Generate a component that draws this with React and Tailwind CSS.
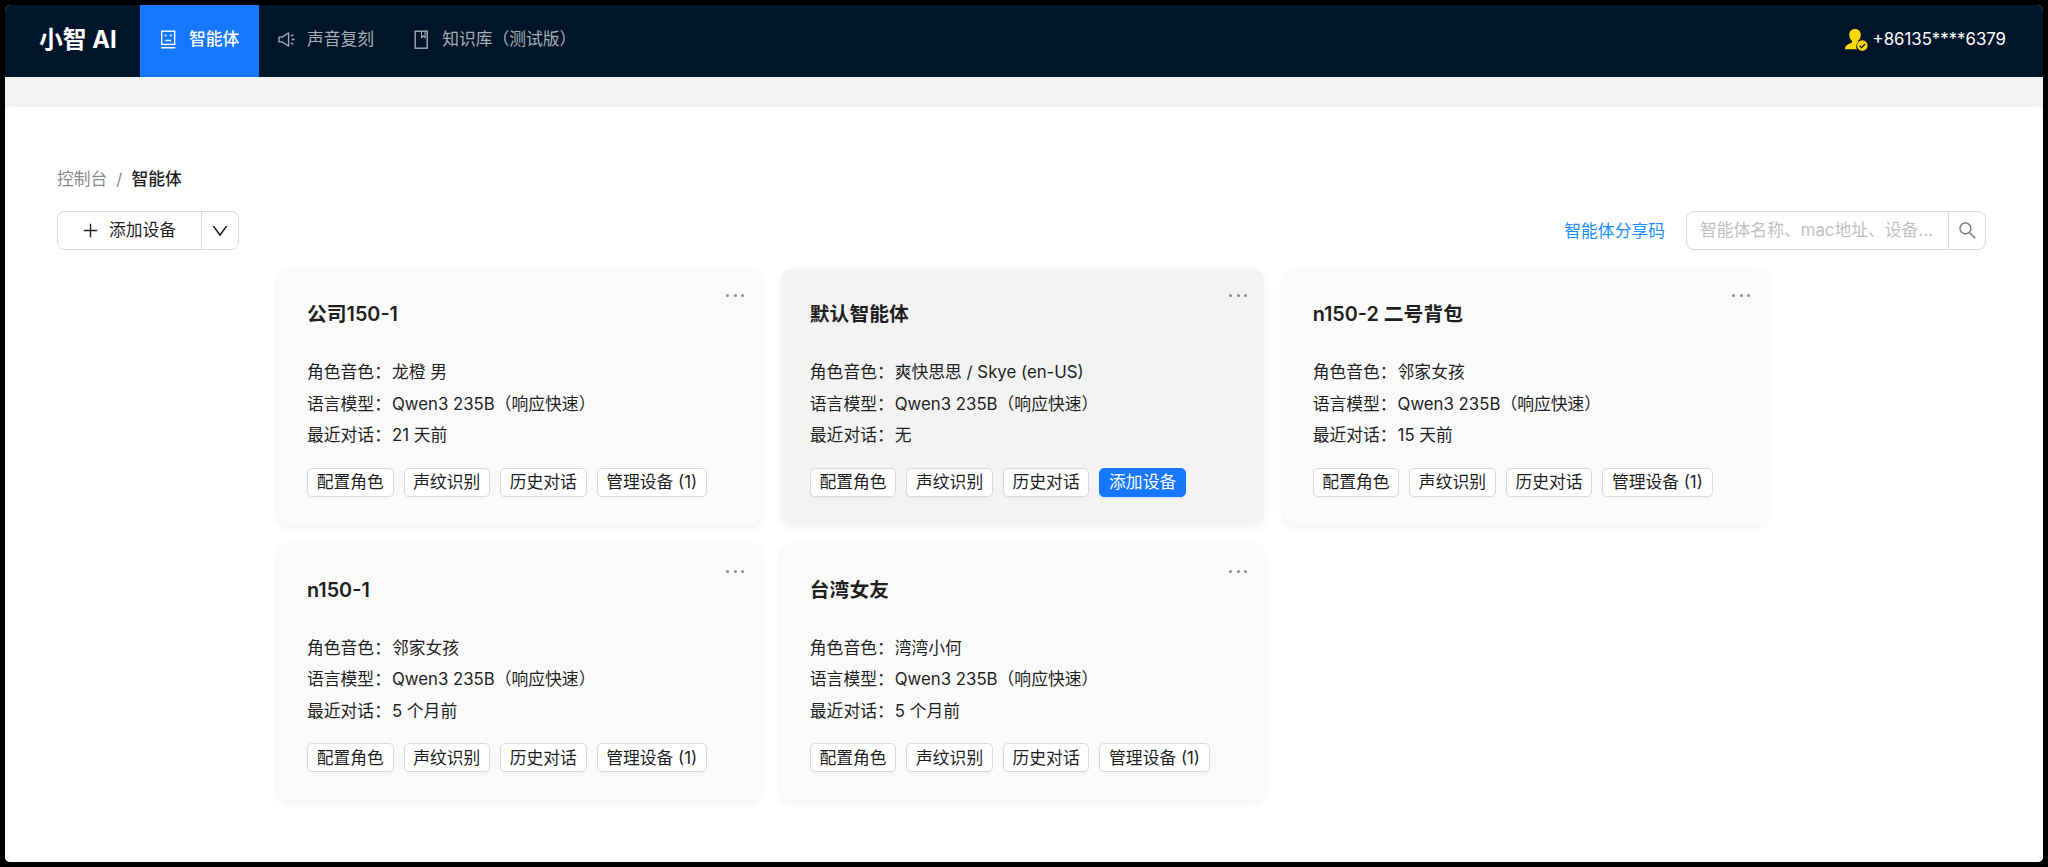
import React from 'react';
import { AiOutlineSound, AiOutlinePlus, AiOutlineDown, AiOutlineSearch } from 'react-icons/ai';

const agents = [
  { name: '公司150-1', voice: '龙橙 男', last: '21 天前', devices: 1 },
  { name: '默认智能体', voice: '爽快思思 / Skye (en-US)', last: '无', devices: 0 },
  { name: 'n150-2 二号背包', voice: '邻家女孩', last: '15 天前', devices: 1 },
  { name: 'n150-1', voice: '邻家女孩', last: '5 个月前', devices: 1 },
  { name: '台湾女友', voice: '湾湾小何', last: '5 个月前', devices: 1 },
];

const AgentIcon = () => (
  <svg width="17" height="20" viewBox="0 0 17 20" fill="none" stroke="currentColor" strokeWidth="1.4">
    <rect x="1.7" y="1.2" width="13" height="13.2" />
    <path d="M4.600 5.500h2M9.800 5.500h2M5.400 10.500h5.600M1.100 17.800h14.200" />
  </svg>
);

const BookIcon = () => (
  <svg width="15" height="20" viewBox="0 0 15 20" fill="none" stroke="currentColor" strokeWidth="1.4">
    <rect x="1.2" y="1.2" width="12" height="17" />
    <path d="M7.500 1.500v6l1.800-1.500 1.800 1.500v-6" strokeWidth="1.1" />
  </svg>
);

const UserIcon = () => (
  <svg width="23" height="22" viewBox="0 0 23 22" fill="#ffd60a">
    <path d="M10 0c3.400 0 5.800 2.300 5.800 5.800 0 2.900-1.200 4.800-2.700 6v1.100a6 6 0 0 0-1.900 4.300c0 1.200.3 2.200.9 3.100H0c0-3.700 2.500-4.800 7-6.700v-1.800c-1.600-1.200-2.700-3.100-2.700-6C4.300 2.300 6.600 0 10 0z" />
    <circle cx="17.300" cy="16.500" r="5.300" />
    <path d="M14.600 16.600l2 2 3.500-3.600" fill="none" stroke="#001529" strokeWidth="1.200" />
  </svg>
);

const Header = () => (
  <header className="h-18 bg-[#001529] flex items-center text-white shrink-0">
    <h1 className="w-[135px] pl-[34px] pb-[3px] text-[23.8px] font-bold whitespace-nowrap leading-none">小智 AI</h1>
    <nav className="flex h-full text-[#a6adb4]">
      <a className="w-[119px] pl-5 pb-[3px] flex items-center bg-[#1677ff] text-white font-medium">
        <AgentIcon />
        <span className="ml-3">智能体</span>
      </a>
      <a className="pl-[18px] pb-[3px] flex items-center">
        <AiOutlineSound size={19} />
        <span className="ml-[11px]">声音复刻</span>
      </a>
      <a className="pl-[40px] pb-[3px] flex items-center">
        <BookIcon />
        <span className="ml-[13px]">知识库（测试版）</span>
      </a>
    </nav>
    <div className="ml-auto mr-[37px] pb-[3px] flex items-center gap-[5px]">
      <UserIcon />
      <span className="text-[16.8px]">+86135****6379</span>
    </div>
  </header>
);

const Toolbar = () => (
  <div className="flex items-center justify-between h-[39px]">
    <div className="flex h-full w-[182px] border border-[#d9d9d9] rounded-lg bg-white">
      <button className="flex-1 flex items-center justify-center gap-[9px] pr-0.5">
        <AiOutlinePlus size={19} />
        <span className="pt-px">添加设备</span>
      </button>
      <button className="w-[37px] border-l border-[#d9d9d9] flex items-center justify-center">
        <AiOutlineDown size={20} />
      </button>
    </div>
    <div className="flex items-center h-full">
      <a className="text-[#1890ff] mr-[21px] pt-0.5">智能体分享码</a>
      <div className="flex h-full w-[300px] border border-[#d9d9d9] rounded-lg bg-white">
        <div className="flex-1 flex items-center pl-[13px] pt-px text-[#bfbfbf] whitespace-nowrap">
          智能体名称、mac地址、设备...
        </div>
        <button className="w-[37px] border-l border-[#d9d9d9] flex items-center justify-center text-[#808080]">
          <AiOutlineSearch size={21} />
        </button>
      </div>
    </div>
  </div>
);

const CardButton = ({ children, primary }) => (
  <button
    className={
      primary
        ? 'h-[29px] px-[8.7px] border border-[#1677ff] rounded-[5px] bg-[#1677ff] text-white shadow-[0_2px_0_rgba(5,145,255,0.1)]'
        : 'h-[29px] px-[8.7px] border border-[#d9d9d9] rounded-[5px] bg-white shadow-[0_2px_0_rgba(0,0,0,0.02)]'
    }
  >
    <span className="flex items-center pt-px whitespace-nowrap leading-none">{children}</span>
  </button>
);

const AgentCard = ({ agent }) => (
  <div
    className={`relative h-[256px] rounded-[10px] px-[29px] shadow-[0_2px_10px_rgba(0,0,0,0.07)] ${
      agent.devices ? 'bg-[#fafafa]' : 'bg-[#f3f3f3]'
    }`}
  >
    <div className="absolute top-[25px] right-[17px] flex gap-[4.5px]">
      <i className="size-[3px] rounded-full bg-[#8c8c8c]" />
      <i className="size-[3px] rounded-full bg-[#8c8c8c]" />
      <i className="size-[3px] rounded-full bg-[#8c8c8c]" />
    </div>
    <h3 className="pt-[30px] text-[19.8px] leading-[31px] font-semibold">{agent.name}</h3>
    <div className="mt-[27px] leading-[31.5px]">
      <p><span className="mr-px">角色音色：</span>{agent.voice}</p>
      <p><span className="mr-px">语言模型：</span>Qwen3 235B（响应快速）</p>
      <p><span className="mr-px">最近对话：</span>{agent.last}</p>
    </div>
    <div className="mt-[16px] flex gap-2.5">
      <CardButton>配置角色</CardButton>
      <CardButton>声纹识别</CardButton>
      <CardButton>历史对话</CardButton>
      {agent.devices ? (
        <CardButton>管理设备 ({agent.devices})</CardButton>
      ) : (
        <CardButton primary>添加设备</CardButton>
      )}
    </div>
  </div>
);

const App = () => {
  return (
    <div className="h-[867px] bg-black p-[5px] font-[Inter,'Noto_Sans_CJK_SC',sans-serif] text-[16.8px] text-[#1f1f1f]">
      <div className="h-[857px] rounded-[5px] overflow-hidden bg-[#f3f3f3] flex flex-col">
        <Header />
        <main className="mt-[30px] flex-1 bg-white rounded-t-lg pl-[52px] pr-[57px] pt-[60px]">
          <div className="h-[26px] flex items-center mb-[18px]">
            <span className="text-[#8c8c8c]">控制台</span>
            <span className="mx-[9px] text-[#8c8c8c]">/</span>
            <span className="font-medium">智能体</span>
          </div>
          <Toolbar />
          <div className="w-[1489px] ml-[221px] mt-[19px] grid grid-cols-3 gap-x-[19.5px] gap-y-[19.5px]">
            {agents.map((agent) => (
              <AgentCard key={agent.name} agent={agent} />
            ))}
          </div>
        </main>
      </div>
    </div>
  );
};

export default App;
